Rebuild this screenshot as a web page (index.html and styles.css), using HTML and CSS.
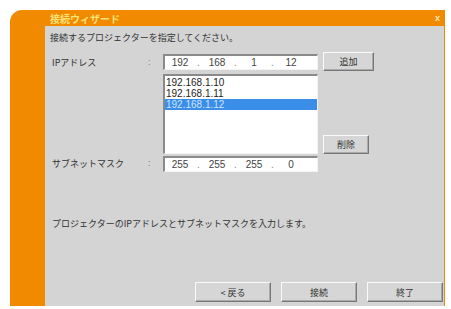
FILE: index.html
```html
<!DOCTYPE html>
<html lang="ja">
<head>
    <meta charset="UTF-8">
    <title>接続ウィザード</title>
    <link rel="stylesheet" href="styles.css">
</head>
<body>
    <div class="dialog">
        <div class="titlebar">
            <span class="title">接続ウィザード</span>
            <span class="close">x</span>
        </div>
        <div class="content">
            <p class="heading">接続するプロジェクターを指定してください。</p>

            <div class="form">
                <div class="label">IPアドレス</div>
                <div class="colon">:</div>
                <div class="ipbox">
                    <span>192</span><i>.</i><span>168</span><i>.</i><span>1</span><i>.</i><span>12</span>
                </div>
                <button class="btn small">追加</button>

                <div class="list-cell">
                    <ul class="listbox">
                        <li>192.168.1.10</li>
                        <li>192.168.1.11</li>
                        <li class="selected">192.168.1.12</li>
                    </ul>
                </div>
                <div class="del-cell">
                    <button class="btn small">削除</button>
                </div>

                <div class="label">サブネットマスク</div>
                <div class="colon">:</div>
                <div class="ipbox">
                    <span>255</span><i>.</i><span>255</span><i>.</i><span>255</span><i>.</i><span>0</span>
                </div>
            </div>

            <p class="info">プロジェクターのIPアドレスとサブネットマスクを入力します。</p>

            <div class="footer">
                <button class="btn wide">&lt; 戻る</button>
                <button class="btn wide">接続</button>
                <button class="btn wide">終了</button>
            </div>
        </div>
    </div>
</body>
</html>
```

FILE: styles.css
```css
* {
    margin: 0;
    padding: 0;
    box-sizing: border-box;
}
body {
    background: #ffffff;
    padding: 10px 6px 3px 10px;
    font-family: "Noto Sans CJK JP", "Liberation Sans", sans-serif;
    font-size: 9px;
    color: #333;
}
.dialog {
    background: #f28a00;
    border-top-left-radius: 12px;
    padding-left: 35px;
    padding-right: 1px;
    height: 296px;
    display: flex;
    flex-direction: column;
}
.titlebar {
    height: 16px;
    display: flex;
    justify-content: space-between;
    align-items: center;
    padding: 0 4px 0 5px;
}
.title {
    color: #f9e27a;
    font-weight: bold;
    font-size: 10px;
}
.close {
    color: #fbe6b0;
    font-family: "Liberation Sans", sans-serif;
    font-weight: bold;
    font-size: 9px;
}
.content {
    flex: 1;
    background: #d4d4d4;
    padding: 5px 0 4px 5px;
    display: flex;
    flex-direction: column;
}
.heading {
    height: 14px;
    line-height: 14px;
}
.form {
    display: grid;
    grid-template-columns: 96px 15px 155px 51px;
    column-gap: 0;
    row-gap: 0;
    margin-top: 7px;
    padding-left: 2px;
}
.label, .colon {
    align-self: center;
}
.colon {
    font-family: "Liberation Sans", sans-serif;
    color: #777;
}
.ipbox {
    height: 16px;
    background: #fff;
    border-top: 2px solid #8a8a8a;
    border-left: 2px solid #8a8a8a;
    border-right: 1px solid #f4f4f4;
    border-bottom: 1px solid #f4f4f4;
    display: flex;
    align-items: center;
    font-family: "Liberation Sans", sans-serif;
    font-size: 10px;
    color: #444;
    margin-top: 2px;
}
.ipbox span {
    width: 30px;
    text-align: center;
}
.ipbox i {
    font-style: normal;
    width: 7px;
    text-align: center;
    color: #888;
}
.btn {
    font-family: "Noto Sans CJK JP", sans-serif;
    font-size: 9px;
    color: #333;
    background: #d6d6d6;
    border: 1px solid;
    border-color: #fafafa #777 #777 #fafafa;
    box-shadow: inset -1px -1px 0 #aaa;
}
.small {
    width: 51px;
    height: 19px;
    margin-left: 5px;
    margin-top: 0;
}
.list-cell {
    grid-column: 3;
    padding-top: 3px;
}
.listbox {
    list-style: none;
    height: 80px;
    background: #fff;
    border-top: 2px solid #8a8a8a;
    border-left: 2px solid #8a8a8a;
    border-right: 1px solid #f4f4f4;
    border-bottom: 1px solid #f4f4f4;
    font-family: "Liberation Sans", sans-serif;
    font-size: 10px;
    padding-top: 1px;
}
.listbox li {
    height: 11px;
    line-height: 11px;
    padding-left: 1px;
    color: #222;
}
.listbox li.selected {
    background: #3a8ee8;
    color: #cfe4ff;
}
.del-cell {
    grid-column: 4;
    display: flex;
    align-items: flex-end;
}
.del-cell .small {
    margin-bottom: 0;
}
.form .label:nth-of-type(1) {
    margin-top: 2px;
}
.info {
    margin-top: 45px;
    padding-left: 2px;
}
.footer {
    margin-top: auto;
    display: flex;
    justify-content: flex-end;
    gap: 10px;
    padding-right: 1px;
}
.wide {
    width: 76px;
    height: 20px;
}
```
